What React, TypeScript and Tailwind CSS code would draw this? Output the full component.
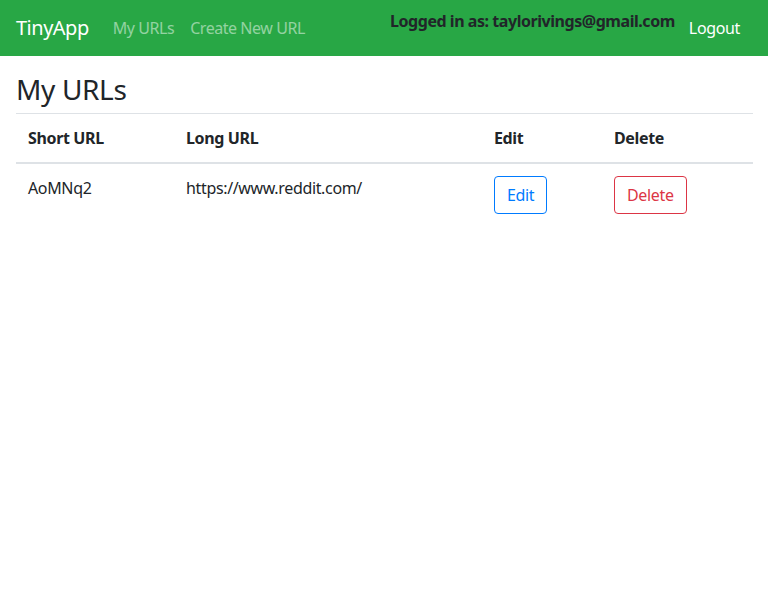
import React from 'react';

const urls = [{ short: 'AoMNq2', long: 'https://www.reddit.com/' }];

function NavBar() {
  return (
    <nav className="flex h-[56px] items-center bg-[#28a745] px-4">
      <a href="#" className="mr-4 text-[20px] leading-[30px] tracking-[-0.5px] text-white">TinyApp</a>
      <a href="#" className="px-2 text-[16px] leading-6 tracking-[-0.45px] text-white/50">My URLs</a>
      <a href="#" className="px-2 text-[16px] leading-6 tracking-[-0.45px] text-white/50">Create New URL</a>
      <div className="ml-auto flex items-center">
        <h6 className="mb-[14px] text-[16px] font-bold leading-6 tracking-[-0.45px] text-[#212529]">Logged in as: taylorivings@gmail.com</h6>
        <a href="#" className="ml-[6px] mr-[4px] px-2 text-[16px] leading-6 text-white">Logout</a>
      </div>
    </nav>
  );
}

function App() {
  return (
    <div className="min-h-[602px] bg-white font-['Noto_Sans',sans-serif] tracking-[-0.35px] text-[#212529]">
      <NavBar />
      <main className="pl-4 pr-[15px]">
        <h2 className="mb-[4px] pt-[13px] text-[28px] leading-[40px]">My URLs</h2>
        <table className="w-full border-collapse text-left text-[16px] leading-6">
          <thead>
            <tr>
              <th className="w-[158px] border-t border-b-2 border-[#dee2e6] p-3 font-bold">Short URL</th>
              <th className="w-[308px] border-t border-b-2 border-[#dee2e6] p-3 font-bold">Long URL</th>
              <th className="w-[120px] border-t border-b-2 border-[#dee2e6] p-3 font-bold">Edit</th>
              <th className="border-t border-b-2 border-[#dee2e6] p-3 font-bold">Delete</th>
            </tr>
          </thead>
          <tbody>
            {urls.map((u) => (
              <tr key={u.short}>
                <td className="p-3 align-top">{u.short}</td>
                <td className="p-3 align-top">{u.long}</td>
                <td className="p-3 align-top">
                  <button className="rounded border border-[#007bff] px-3 py-[6px] text-[#007bff]">Edit</button>
                </td>
                <td className="p-3 align-top">
                  <button className="rounded border border-[#dc3545] px-3 py-[6px] text-[#dc3545]">Delete</button>
                </td>
              </tr>
            ))}
          </tbody>
        </table>
      </main>
    </div>
  );
}

export default App;
